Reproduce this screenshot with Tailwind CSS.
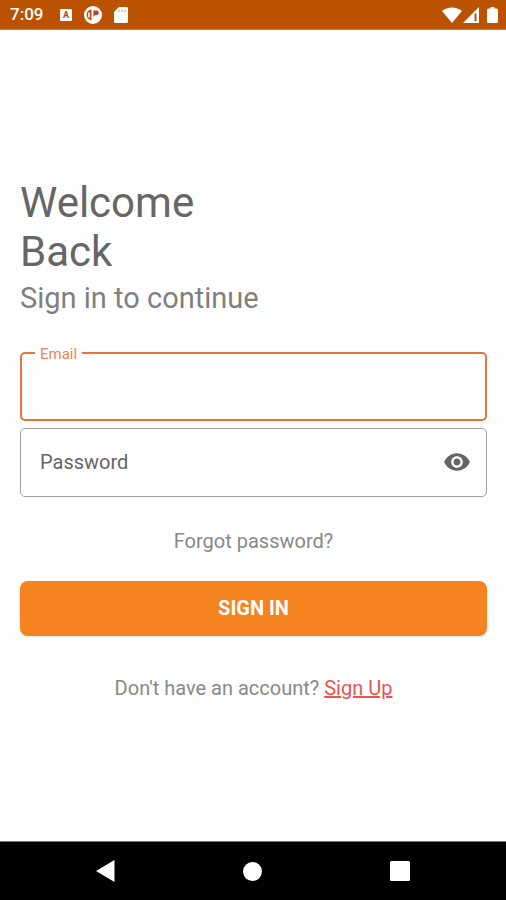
<!DOCTYPE html>
<html lang="en">
  <head>
    <meta charset="UTF-8" />
    <meta name="viewport" content="width=device-width, initial-scale=1.0" />
    <script src="https://cdn.jsdelivr.net/npm/@tailwindcss/browser@4"></script>
    <title>Sign In</title>
  </head>
  <body class="flex flex-col min-h-screen bg-white font-[Roboto,sans-serif]">
    <!-- status bar -->
    <header
      class="flex items-center justify-between h-[30px] pt-px pl-[10px] pr-2 bg-[#bb5200] text-white border-b border-[#cd7a3c]"
    >
      <div class="flex items-center">
        <span class="w-[50px] text-[17px] font-medium">7:09</span>
        <span
          class="flex items-center justify-center w-3 h-3 mr-3 rounded-[1px] bg-white text-[#9c4a2a] text-[9px] leading-3 font-bold"
          >A</span
        >
        <svg class="w-[18px] h-[18px] mr-3" viewBox="0 0 18 18">
          <circle cx="9" cy="9" r="9" fill="#fff" />
          <path
            d="M7.500 3.500C4 4 2.500 6.500 2.700 9.500c.3 2.500 2 4.500 4.800 5z"
            fill="#bb5200"
          />
          <path d="M5 6.500v5" stroke="#fff" stroke-width="1.500" />
          <path
            d="M9.500 4l2 .8c2-.8 3.500.4 3.300 2.200-.2 1.700-1.800 2.500-3.300 1.800L9.500 11z"
            fill="#a8452a"
          />
        </svg>
        <svg class="w-[14px] h-4" viewBox="0 0 14 16">
          <path
            d="M5 0h7.500A1.500 1.500 0 0 1 14 1.500v13a1.500 1.500 0 0 1-1.500 1.500h-11A1.500 1.500 0 0 1 0 14.500V5z"
            fill="#fff"
          />
          <path d="M5 2.500v2.500M8 2.500v2.500M11 2.500v2.500" stroke="#d99a70" />
        </svg>
      </div>
      <div class="flex items-center">
        <svg class="w-[20px] h-4 mr-px" viewBox="0 0 20 16">
          <path d="M0 4C5.500-.8 14.500-.8 20 4L10 16z" fill="#fff" />
        </svg>
        <svg class="w-4 h-4 mr-2" viewBox="0 0 16 16">
          <path d="M16 0v16H0z" fill="#fff" />
          <path d="M11.500 6.500h2v7.500h-2z" fill="#bb5200" />
        </svg>
        <svg class="w-[11px] h-4" viewBox="0 0 11 16">
          <path
            d="M3.500 0h4v1.500H9.500A1.500 1.500 0 0 1 11 3v11.500A1.500 1.500 0 0 1 9.500 16h-8A1.500 1.500 0 0 1 0 14.500V3A1.500 1.500 0 0 1 1.500 1.500h2z"
            fill="#fff"
          />
        </svg>
      </div>
    </header>

    <main class="flex flex-col justify-center grow pl-5 pr-[19px] pt-1.5">
      <h1 class="text-[42px] leading-[49px] text-[#666]">Welcome<br />Back</h1>
      <p class="text-[29px] leading-[44px] text-[#808080]">
        Sign in to continue
      </p>

      <form class="flex flex-col mt-8">
        <div class="relative">
          <label
            for="email"
            class="absolute left-[15px] -top-2 px-[5px] bg-white text-[15px] leading-5 text-[#f08450]"
            >Email</label
          >
          <input
            type="email"
            id="email"
            name="email"
            class="block w-full h-[69px] px-[18px] border-2 border-[#e8743a] rounded-[5px] text-xl text-[#444] outline-none"
          />
        </div>

        <div class="relative mt-[7px]">
          <input
            type="password"
            id="password"
            name="password"
            placeholder=" "
            class="peer block w-full h-[69px] pl-[19px] pr-16 border border-[#a0a0a0] rounded-[5px] text-xl text-[#444] outline-none"
          />
          <label
            for="password"
            class="absolute left-5 top-5 text-xl leading-7 text-[#666] invisible peer-placeholder-shown:visible"
            >Password</label
          >
          <button
            type="button"
            id="toggle"
            aria-label="Show password"
            class="absolute right-4 top-5 flex items-center justify-center w-7 h-7"
          >
            <svg class="w-7 h-7" viewBox="0 0 24 24" fill="#666">
              <path
                d="M12 4.500C7 4.500 2.730 7.610 1 12c1.730 4.390 6 7.500 11 7.500s9.270-3.110 11-7.500c-1.730-4.390-6-7.500-11-7.500zM12 17c-2.760 0-5-2.240-5-5s2.240-5 5-5 5 2.240 5 5-2.240 5-5 5zm0-8c-1.660 0-3 1.340-3 3s1.340 3 3 3 3-1.340 3-3-1.340-3-3-3z"
              />
            </svg>
          </button>
        </div>

        <a
          href="#"
          class="self-center mt-8 text-xl leading-6 text-[#888]"
          >Forgot password?</a
        >
        <button
          type="submit"
          class="w-full h-[55px] mt-7 rounded-lg bg-[#f58320] text-xl font-bold text-white shadow"
        >
          SIGN IN
        </button>
      </form>

      <p class="mt-10 text-xl leading-6 text-center text-[#888]">
        Don't have an account?
        <a href="#" class="text-[#ee5350] underline">Sign Up</a>
      </p>
    </main>

    <!-- navigation bar -->
    <nav
      class="flex items-center justify-between h-[59px] px-24 bg-black border-t border-[#777]"
    >
      <button type="button" aria-label="Back">
        <svg class="w-[19px] h-[22px]" viewBox="0 0 19 22" fill="#fff">
          <path d="M18.500 0v22L0 11z" />
        </svg>
      </button>
      <button type="button" aria-label="Home">
        <svg class="w-[19px] h-[19px]" viewBox="0 0 19 19" fill="#fff">
          <circle cx="9.500" cy="9.500" r="9.500" />
        </svg>
      </button>
      <button type="button" aria-label="Recent apps">
        <svg class="w-5 h-5" viewBox="0 0 20 20" fill="#fff">
          <rect width="20" height="20" rx="1.500" />
        </svg>
      </button>
    </nav>
  </body>
  <script>
    const passwordEl = document.getElementById("password");
    const toggleEl = document.getElementById("toggle");

    // show or hide the password
    toggleEl.addEventListener("click", () => {
      passwordEl.type = passwordEl.type === "password" ? "text" : "password";
    });
  </script>
</html>
